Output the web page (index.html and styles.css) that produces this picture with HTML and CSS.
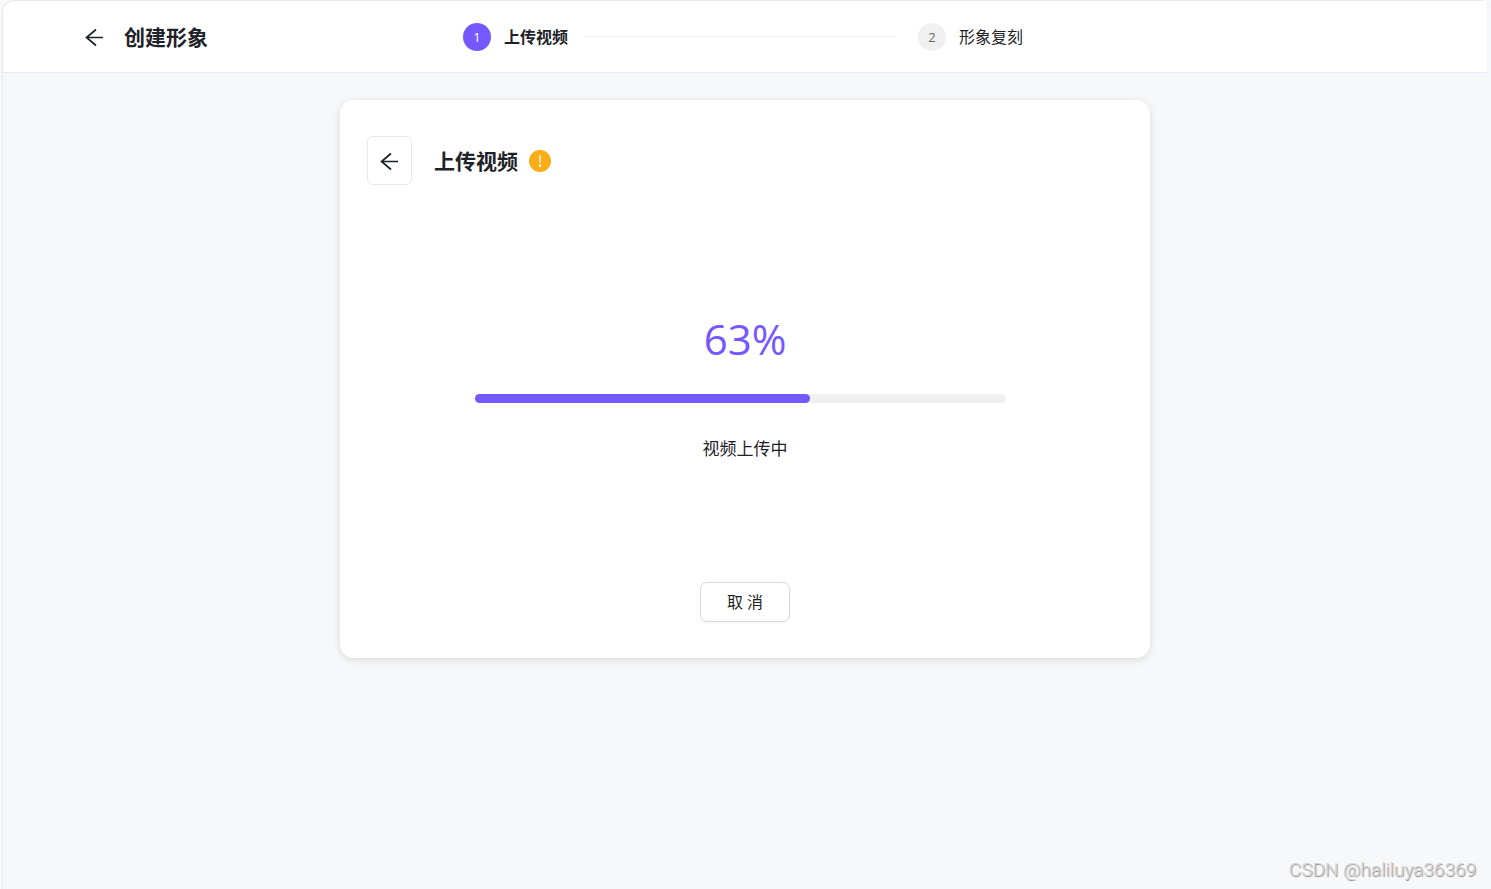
FILE: index.html
```html
<!DOCTYPE html>
<html lang="zh-CN">
<head>
  <meta charset="UTF-8">
  <meta name="viewport" content="width=device-width, initial-scale=1.0">
  <title>创建形象</title>
  <link rel="stylesheet" href="styles.css">
</head>
<body>
  <div class="app">
    <header class="header">
      <div class="header-left">
        <a class="header-back" href="#" aria-label="返回">
          <svg class="arrow" viewBox="0 0 20 20"><path d="M11 2.5 1.5 10.5 11 18.5M1.5 10.5H18"/></svg>
        </a>
        <h1 class="title">创建形象</h1>
      </div>
      <ol class="steps">
        <li class="step active">
          <span class="step-icon">1</span>
          <span class="step-title">上传视频</span>
        </li>
        <li class="step-line" role="presentation"></li>
        <li class="step">
          <span class="step-icon">2</span>
          <span class="step-title">形象复刻</span>
        </li>
      </ol>
    </header>

    <main class="content">
      <section class="card">
        <div class="card-head">
          <button class="back-btn" type="button" aria-label="返回">
            <svg class="arrow" viewBox="0 0 20 20"><path d="M11 2.5 1.5 10.5 11 18.5M1.5 10.5H18"/></svg>
          </button>
          <h2 class="title">上传视频</h2>
          <svg class="warning" viewBox="0 0 22 22">
            <circle cx="11" cy="11" r="11"/>
            <path d="M10.3 5.3h1.4v7.7h-1.4z"/>
            <circle class="warning-dot" cx="11" cy="15.8" r="1.2"/>
          </svg>
        </div>

        <div class="upload">
          <div class="percent">63%</div>
          <div class="progress" role="progressbar" aria-label="视频上传中" aria-valuenow="63" aria-valuemin="0" aria-valuemax="100">
            <div class="progress-bar" style="width: 63%"></div>
          </div>
          <p class="upload-text">视频上传中</p>
        </div>

        <button class="cancel-btn" type="button">取 消</button>
      </section>
    </main>

    <footer class="watermark">CSDN @haliluya36369</footer>
  </div>
</body>
</html>
```
FILE: styles.css
```css
* {
  box-sizing: border-box;
}

body {
  margin: 0;
  background-color: #f7f8fa;
  color: #1f2329;
  font-family: "Open Sans", "Noto Sans CJK SC", sans-serif;
  font-size: 16px;
}

.app {
  display: flex;
  flex-direction: column;
  min-height: 100vh;
  margin-left: 2px;
  border-top: 1px solid #e8e8e8;
  border-left: 1px solid #e8e8e8;
  border-radius: 12px 12px 0 0;
}

/* header */
.header {
  display: grid;
  grid-template-columns: 1fr 564px 1fr;
  align-items: center;
  height: 72px;
  margin-right: 4px;
  background-color: #fff;
  border-bottom: 1px solid #e8eafb;
  border-radius: 12px 0 0 0;
}

.header-left {
  display: flex;
  align-items: center;
  gap: 19px;
  padding-left: 82px;
}

.header-back {
  display: flex;
}

.title {
  margin: 0;
  font-size: 21px;
  font-weight: 700;
  line-height: 30px;
}

.arrow {
  width: 20px;
  height: 20px;
  fill: none;
  stroke: #1f2329;
  stroke-width: 1.7;
}

.steps {
  display: flex;
  align-items: center;
  margin: 0;
  padding: 0 4px 0 0;
  list-style: none;
}

.step {
  display: flex;
  align-items: center;
  gap: 13px;
}

.step-icon {
  width: 28px;
  height: 28px;
  border-radius: 50%;
  background-color: #f0f0f0;
  color: #666;
  font-size: 13px;
  line-height: 28px;
  text-align: center;
}

.step-title {
  line-height: 24px;
}

.active .step-icon {
  background-color: #7559ff;
  color: #fff;
}

.active .step-title {
  font-weight: 700;
}

.step-line {
  flex: 1;
  height: 1px;
  margin: 0 22px 0 16px;
  background-color: #f0f0f0;
}

/* upload card */
.content {
  flex: 1;
  margin-right: 4px;
  padding: 27px 16px;
}

.card {
  display: flex;
  flex-direction: column;
  align-items: center;
  max-width: 810px;
  margin: 0 auto;
  padding: 36px 27px;
  background-color: #fff;
  border-radius: 14px;
  box-shadow: 0 2px 8px rgba(0, 0, 0, 0.12);
}

.card-head {
  display: flex;
  align-items: center;
  align-self: stretch;
}

.back-btn {
  display: flex;
  align-items: center;
  justify-content: center;
  width: 45px;
  height: 49px;
  margin-right: 22px;
  padding: 0;
  background-color: #fff;
  border: 1px solid #e8e8e8;
  border-radius: 6px;
  cursor: pointer;
}

.warning {
  width: 22px;
  height: 22px;
  margin-left: 11px;
  fill: #faad14;
}

.warning path,
.warning-dot {
  fill: #fff;
}

.upload {
  width: 100%;
  max-width: 540px;
  padding: 124px 0 120px;
  text-align: center;
}

.percent {
  color: #7559ff;
  font-size: 42px;
  font-weight: 400;
  line-height: 60px;
}

.progress {
  height: 9px;
  margin: 25px 9px 33px 0;
  background-color: #f0f0f0;
  border-radius: 5px;
}

.progress-bar {
  height: 100%;
  background-color: #7559ff;
  border-radius: 5px;
}

.upload-text {
  margin: 0;
  font-size: 17px;
  line-height: 26px;
}

.cancel-btn {
  width: 90px;
  height: 40px;
  padding: 0 0 2px;
  background-color: #fff;
  border: 1px solid #d9d9d9;
  border-radius: 7px;
  box-shadow: 0 2px 0 rgba(0, 0, 0, 0.02);
  color: #1f1f1f;
  font-family: inherit;
  font-size: 16px;
  cursor: pointer;
}

.watermark {
  padding: 0 15px 7px;
  color: #d4d4d6;
  font-family: Roboto, sans-serif;
  font-size: 19px;
  font-weight: 300;
  line-height: 24px;
  text-align: right;
  text-shadow: 1px 1px 1px #888;
}
```
